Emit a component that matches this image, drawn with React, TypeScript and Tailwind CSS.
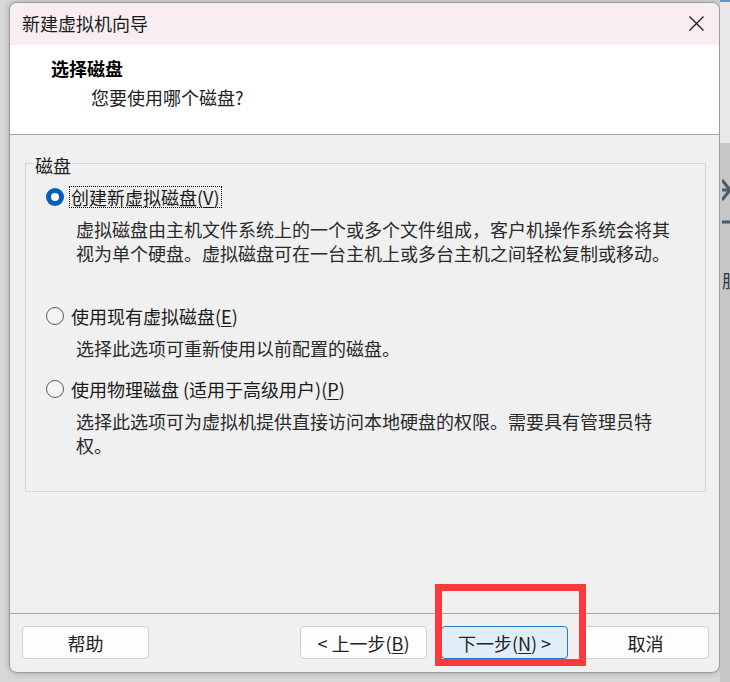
import React from "react";

const font = "font-['Noto_Sans_CJK_SC',sans-serif]";

const Radio: React.FC<{ checked?: boolean }> = ({ checked }) =>
  checked ? (
    <span className="w-[18px] h-[18px] rounded-full bg-[#005fb8] flex items-center justify-center shrink-0">
      <span className="w-[8px] h-[8px] rounded-full bg-white" />
    </span>
  ) : (
    <span className="w-[18px] h-[18px] rounded-full border border-[#5a5a5a] bg-[#f4f4f4] shrink-0" />
  );

const Option: React.FC<{
  checked?: boolean;
  focused?: boolean;
  label: React.ReactNode;
  lines: string[];
  className?: string;
}> = ({ checked, focused, label, lines, className }) => (
  <div className={className}>
    <div className="flex items-center h-[24px] gap-[5px]">
      <Radio checked={checked} />
      <span
        className={`leading-[20px] px-[1px] border ${
          focused ? "border-dotted border-black" : "border-transparent"
        }`}
      >
        {label}
      </span>
    </div>
    <div className="pl-[30px] mt-[8px] leading-[24px] text-[#2a2a2a] whitespace-nowrap">
      {lines.map((l) => (
        <div key={l}>{l}</div>
      ))}
    </div>
  </div>
);

const Btn: React.FC<{ children: React.ReactNode; primary?: boolean }> = ({ children, primary }) => (
  <button
    className={`w-[127px] h-[33px] rounded-[4px] border flex items-center justify-center text-[18px] leading-none text-[#222] ${
      primary ? "bg-[#e0eef9] border-[#2a78c8]" : "bg-[#fdfdfd] border-[#d0d0d0]"
    }`}
  >
    {children}
  </button>
);

export default function App() {
  return (
    <div className={`${font} relative w-[730px] h-[682px] overflow-hidden bg-[#d8d8d8] flex pt-[2px] pl-[9px] text-[18px] text-[#1a1a1a]`}>
      {/* Window */}
      <div className="w-[711px] h-[671px] shrink-0 rounded-[8px] border border-[#9c9c9c] bg-[#f0f0f0] overflow-hidden flex flex-col shadow-[0_0_6px_rgba(0,0,0,0.25)]">
        {/* Title bar */}
        <div className="h-[42px] shrink-0 bg-[#f8eef2] flex items-center justify-between pl-[12px] pr-[15px] pb-[3px]">
          <span className="leading-[24px]">新建虚拟机向导</span>
          <svg width="15" height="15" viewBox="0 0 15 15" className="mt-[1px]">
            <path d="M0.5 0.5 L14.5 14.5 M14.5 0.5 L0.5 14.5" stroke="#1c1c1c" strokeWidth="1.3" fill="none" />
          </svg>
        </div>

        {/* Header */}
        <div className="h-[90px] shrink-0 bg-white border-b border-[#a6a6a6] pt-[11px]">
          <div className="pl-[41px] leading-[24px] font-bold text-black">选择磁盘</div>
          <div className="pl-[81px] mt-[5px] leading-[24px] text-[#222]">您要使用哪个磁盘?</div>
        </div>

        {/* Content */}
        <div className="h-[478px] shrink-0 pt-[14px] pl-[15px] pr-[13px]">
          <fieldset className="border border-[#d6d6d6] pl-[20px] pt-[8px] pb-[34px]">
            <legend className="-ml-[12px] px-[1px] pt-[4px] leading-[24px] text-[#222]">磁盘</legend>
            <Option
              checked
              focused
              label={
                <>
                  创建新虚拟磁盘(<span className="underline underline-offset-2">V</span>)
                </>
              }
              lines={[
                "虚拟磁盘由主机文件系统上的一个或多个文件组成，客户机操作系统会将其",
                "视为单个硬盘。虚拟磁盘可在一台主机上或多台主机之间轻松复制或移动。",
              ]}
            />
            <Option
              className="mt-[39px]"
              label={
                <>
                  使用现有虚拟磁盘(<span className="underline underline-offset-2">E</span>)
                </>
              }
              lines={["选择此选项可重新使用以前配置的磁盘。"]}
            />
            <Option
              className="mt-[17px]"
              label={
                <>
                  使用物理磁盘 (适用于高级用户)(<span className="underline underline-offset-2">P</span>)
                </>
              }
              lines={[
                "选择此选项可为虚拟机提供直接访问本地硬盘的权限。需要具有管理员特",
                "权。",
              ]}
            />
          </fieldset>
        </div>

        {/* Footer */}
        <div className="flex-1 border-t border-[#a6a6a6] flex justify-between pt-[12px] pl-[12px] pr-[10px]">
          <Btn>帮助</Btn>
          <div className="flex gap-[14px]">
            <Btn>
              &lt; 上一步(<span className="underline underline-offset-2">B</span>)
            </Btn>
            <Btn primary>
              下一步(<span className="underline underline-offset-2">N</span>) &gt;
            </Btn>
            <Btn>取消</Btn>
          </div>
        </div>
      </div>

      {/* Background app peeking at the right edge */}
      <div className="w-[10px] shrink-0 -mt-[2px] flex flex-col overflow-hidden">
        <div className="h-[143px] bg-[#e8e8e8] border-t-2 border-[#5b9bd5]" />
        <div className="flex-1 bg-[#c6c6c6] pt-[35px] pl-[2px] flex flex-col">
          <svg width="10" height="50" viewBox="0 0 10 50">
            <path d="M0 2 L8 12 L0 22" stroke="#4b5b69" strokeWidth="3" fill="none" />
            <path d="M0 12 H10" stroke="#4b5b69" strokeWidth="3" />
            <path d="M0 44 H10" stroke="#4b5b69" strokeWidth="3" />
          </svg>
          <span className="mt-[40px] text-[18px] leading-[24px] text-[#333] whitespace-nowrap">肌</span>
        </div>
      </div>

      {/* Red annotation box */}
      <div className="absolute left-[435px] top-[584px] w-[151px] h-[82px] border-[7px] border-[#fd3a3a]" />
    </div>
  );
}
